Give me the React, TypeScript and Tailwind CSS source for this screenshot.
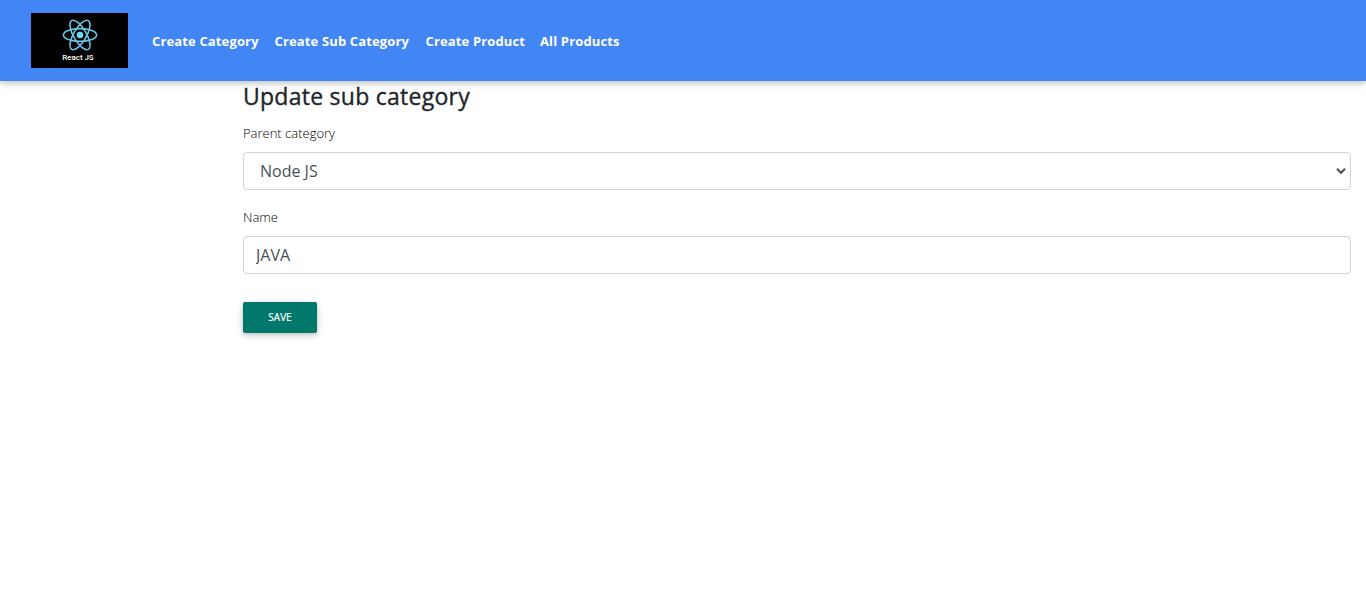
import { useState } from 'react';

const links = [
  { label: 'Create Category', width: 'w-[106.5px]' },
  { label: 'Create Sub Category', width: 'w-[135px]' },
  { label: 'Create Product', width: 'w-[98.5px]' },
  { label: 'All Products', width: 'w-[80px]' },
];

function Logo() {
  return (
    <a href="#" className="flex h-[55px] w-[97px] flex-col items-center bg-black pt-[5px]">
      <svg width="36" height="34" viewBox="-18 -17 36 34" fill="none" stroke="#68c4e2" strokeWidth="1.6">
        <ellipse rx="16.6" ry="6.4" />
        <ellipse rx="16.6" ry="6.4" transform="rotate(60)" />
        <ellipse rx="16.6" ry="6.4" transform="rotate(120)" />
        <circle r="3.3" fill="#72d6f5" stroke="none" />
      </svg>
      <span className="mr-[3px] mt-px text-[8px] leading-[10px] font-medium text-white font-['Roboto',sans-serif] tracking-[-0.05px]">
        React JS
      </span>
    </a>
  );
}

export default function App() {
  const [parent, setParent] = useState('Node JS');
  const [name, setName] = useState('JAVA');
  return (
    <div className="min-h-[600px] bg-white font-['Open_Sans','Noto_Sans',sans-serif] text-[#212529]">
      <nav className="relative flex h-[81px] items-center bg-[#4285f4] pl-[31px] shadow-[0_2px_5px_0_rgba(0,0,0,0.16),0_2px_10px_0_rgba(0,0,0,0.12)]">
        <Logo />
        <ul className="ml-6 flex gap-4 text-[13px] leading-5 font-bold text-white tracking-[0.14px]">
          {links.map((link) => (
            <li key={link.label} className={link.width}>
              <a href="#" className="whitespace-nowrap">{link.label}</a>
            </li>
          ))}
        </ul>
      </nav>
      <main className="ml-[243px] mr-[15px]">
        <h4 className="pt-px text-[23px] leading-[29px] font-medium tracking-[0.26px] [-webkit-text-stroke:0.35px_#212529]">Update sub category</h4>
        <form onSubmit={(event) => event.preventDefault()}>
          <label htmlFor="parent" className="mt-3 block text-[13px] leading-5 font-light text-black">Parent category</label>
          <div className="mt-[9px] grid items-center">
            <select
              id="parent"
              value={parent}
              onChange={(event) => setParent(event.target.value)}
              className="col-start-1 row-start-1 h-[38px] w-full appearance-none rounded border border-[#ced4da] bg-white px-4 text-[16px] text-[#495057]"
            >
              <option>Node JS</option>
            </select>
            <svg className="pointer-events-none col-start-1 row-start-1 mr-[5px] justify-self-end" width="10" height="8" viewBox="0 0 10 8" fill="none" stroke="#495057" strokeWidth="2">
              <path d="M1 1.8 5 5.8 9 1.8" />
            </svg>
          </div>
          <label htmlFor="name" className="mt-[17px] block text-[13px] leading-5 font-light text-black">Name</label>
          <input
            id="name"
            value={name}
            onChange={(event) => setName(event.target.value)}
            className="mt-[9px] block h-[38px] w-full rounded border border-[#ced4da] bg-white px-3 text-[16px] text-[#495057]"
          />
          <button className="mt-7 flex h-[31px] w-[74px] items-center justify-center rounded-[2px] bg-[#00796b] text-[10px] text-white shadow-[0_2px_5px_0_rgba(0,0,0,0.16),0_2px_10px_0_rgba(0,0,0,0.12)] [-webkit-text-stroke:0.2px_white]">
            SAVE
          </button>
        </form>
      </main>
    </div>
  );
}
